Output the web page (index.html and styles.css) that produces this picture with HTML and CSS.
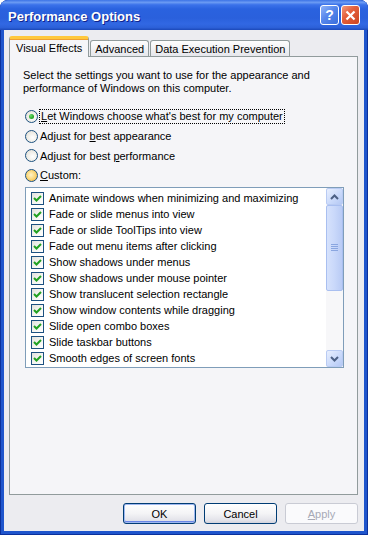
FILE: index.html
```html
<!DOCTYPE html>
<html lang="en">
<head>
    <meta charset="UTF-8">
    <meta name="viewport" content="width=device-width, initial-scale=1.0">
    <title>Performance Options</title>
    <link rel="stylesheet" href="styles.css">
</head>
<body>
    <div class="window">
        <div class="titlebar">
            <span class="title">Performance Options</span>
            <div class="caption">
                <div class="cap-btn help">?</div>
                <div class="cap-btn close">
                    <svg width="11" height="11" viewBox="0 0 11 11"><path d="M1.5 1.5 L9.5 9.5 M9.5 1.5 L1.5 9.5" stroke="#fff" stroke-width="2.2" fill="none"/></svg>
                </div>
            </div>
        </div>

        <div class="client">
            <div class="tabs">
                <div class="tab active">Visual Effects</div>
                <div class="tab">Advanced</div>
                <div class="tab">Data Execution Prevention</div>
            </div>

            <div class="panel">
                <p class="intro">Select the settings you want to use for the appearance and<br>performance of Windows on this computer.</p>

                <div class="options">
                    <div class="opt"><span class="radio checked"></span><span class="focus"><u>L</u>et Windows choose what's best for my computer</span></div>
                    <div class="opt"><span class="radio"></span><span>Adjust for <u>b</u>est appearance</span></div>
                    <div class="opt"><span class="radio"></span><span>Adjust for best <u>p</u>erformance</span></div>
                    <div class="opt"><span class="radio hot"></span><span><u>C</u>ustom:</span></div>
                </div>

                <div class="listbox">
                    <ul class="items">
                        <li><span class="check"></span>Animate windows when minimizing and maximizing</li>
                        <li><span class="check"></span>Fade or slide menus into view</li>
                        <li><span class="check"></span>Fade or slide ToolTips into view</li>
                        <li><span class="check"></span>Fade out menu items after clicking</li>
                        <li><span class="check"></span>Show shadows under menus</li>
                        <li><span class="check"></span>Show shadows under mouse pointer</li>
                        <li><span class="check"></span>Show translucent selection rectangle</li>
                        <li><span class="check"></span>Show window contents while dragging</li>
                        <li><span class="check"></span>Slide open combo boxes</li>
                        <li><span class="check"></span>Slide taskbar buttons</li>
                        <li><span class="check"></span>Smooth edges of screen fonts</li>
                    </ul>
                    <div class="scrollbar">
                        <div class="sb-btn">
                            <svg width="9" height="6" viewBox="0 0 9 6"><path d="M1 5 L4.5 1.5 L8 5" stroke="#4d6185" stroke-width="2" fill="none"/></svg>
                        </div>
                        <div class="sb-track">
                            <div class="sb-thumb">
                                <svg width="7" height="8" viewBox="0 0 7 8"><path d="M0 0.5 H7 M0 2.5 H7 M0 4.5 H7 M0 6.5 H7" stroke="#8aa6e0" stroke-width="1"/></svg>
                            </div>
                        </div>
                        <div class="sb-btn">
                            <svg width="9" height="6" viewBox="0 0 9 6"><path d="M1 1 L4.5 4.5 L8 1" stroke="#4d6185" stroke-width="2" fill="none"/></svg>
                        </div>
                    </div>
                </div>
            </div>

            <div class="buttons">
                <div class="btn default">OK</div>
                <div class="btn">Cancel</div>
                <div class="btn disabled"><u>A</u>pply</div>
            </div>
        </div>
    </div>
</body>
</html>
```

FILE: styles.css
```css
* {
    box-sizing: border-box;
}

body {
    margin: 0;
    font-family: "Liberation Sans", Arial, sans-serif;
    font-size: 11px;
    color: #000;
    background-color: #fff;
}

.window {
    width: 368px;
    height: 535px;
    display: flex;
    flex-direction: column;
    background-color: #1f55cc;
    border-radius: 8px 8px 0 0;
    box-shadow: inset 0 0 0 1px #0b309c;
    overflow: hidden;
}

/* Title bar */
.titlebar {
    height: 30px;
    flex: none;
    display: flex;
    align-items: center;
    padding: 0 8px 0 8px;
    background: linear-gradient(to bottom, #3c73e6 0%, #6a9af3 8%, #3b72ea 16%, #2a62df 30%, #2a60dc 60%, #3168e3 80%, #2c60d8 92%, #1b48b8 100%);
}

.title {
    flex: 1;
    color: #fff;
    font-weight: bold;
    font-size: 13px;
    text-shadow: 1px 1px #10238c;
    padding-top: 2px;
}

.caption {
    display: flex;
    gap: 2px;
}

.cap-btn {
    width: 19px;
    height: 20px;
    border: 1px solid #fff;
    border-radius: 3px;
    display: flex;
    align-items: center;
    justify-content: center;
}

.help {
    background: linear-gradient(135deg, #8fb3f7 0%, #5687ec 45%, #3a6ddc 100%);
    color: #fff;
    font-weight: bold;
    font-size: 14px;
}

.close {
    background: linear-gradient(135deg, #f39a7e 0%, #e4603c 40%, #cc4520 100%);
}

/* Client area */
.client {
    flex: 1;
    margin: 0 4px 4px;
    background-color: #ececf0;
    display: flex;
    flex-direction: column;
    padding: 6px 6px 7px 5px;
}

.tabs {
    height: 20px;
    display: flex;
    align-items: flex-end;
}

.tab {
    height: 16px;
    padding: 1px 4px 0;
    display: flex;
    align-items: center;
    border: 1px solid #919b9c;
    border-bottom: none;
    border-radius: 3px 3px 0 0;
    background: linear-gradient(to bottom, #fdfdfd, #e6e7ec);
    margin-left: 1px;
    white-space: nowrap;
}

.tab.active {
    height: 21px;
    margin-bottom: -1px;
    margin-left: 0;
    padding: 0 6px 1px 6px;
    background: #f5f5f8;
    border-top: 3px solid #ffc83c;
    box-shadow: inset 0 1px 0 #f0a030;
    position: relative;
    z-index: 1;
}

.panel {
    width: 349px;
    height: 439px;
    border: 1px solid #919b9c;
    background-color: #f5f5f8;
    padding: 12px 13px 0 13px;
}

.intro {
    margin: 0;
    line-height: 13px;
}

.options {
    margin-top: 12px;
}

.opt {
    height: 19.5px;
    display: flex;
    align-items: center;
    gap: 2px;
    padding-left: 2px;
}

.radio {
    width: 13px;
    height: 13px;
    border-radius: 50%;
    border: 1px solid #1c5180;
    background: radial-gradient(circle at 60% 60%, #fff 0%, #eceae3 60%, #d4d2c9 100%);
    flex: none;
    display: flex;
    align-items: center;
    justify-content: center;
}

.radio.checked::after {
    content: "";
    width: 5px;
    height: 5px;
    border-radius: 50%;
    background: radial-gradient(circle at 35% 35%, #6ddb6d 0%, #21a121 70%, #128812 100%);
}

.radio.hot {
    background: radial-gradient(circle at 45% 45%, #fff3c8 0%, #fbd87a 50%, #f1a839 100%);
}

.focus {
    outline: 1px dotted #000;
    padding: 0 1px;
    line-height: 13px;
}

/* List with checkboxes */
.listbox {
    margin: 2px 0 0 2px;
    width: 319px;
    height: 181px;
    border: 1px solid #7f9db9;
    background-color: #fff;
    display: flex;
}

.items {
    flex: 1;
    list-style: none;
    margin: 0;
    padding: 2px 0 0 5px;
    overflow: hidden;
}

.items li {
    height: 16px;
    display: flex;
    align-items: center;
    gap: 5px;
    white-space: nowrap;
}

.check {
    width: 13px;
    height: 13px;
    flex: none;
    border: 1px solid #1c5180;
    background-image: url("data:image/svg+xml,%3Csvg xmlns='http://www.w3.org/2000/svg' width='11' height='11'%3E%3Cpath d='M2 5 L4.5 7.5 L9 3' stroke='%2321a121' stroke-width='2' fill='none'/%3E%3C/svg%3E"), linear-gradient(135deg, #e2e2dc 0%, #f4f4f0 50%, #fff 100%);
}

.scrollbar {
    width: 17px;
    flex: none;
    display: flex;
    flex-direction: column;
    background-color: #f7f7f9;
}

.sb-btn {
    height: 17px;
    border: 1px solid #b9cbf3;
    border-radius: 2px;
    background: linear-gradient(135deg, #e8effe 0%, #c8d8fa 60%, #b4c8f4 100%);
    display: flex;
    align-items: center;
    justify-content: center;
}

.sb-track {
    flex: 1;
}

.sb-thumb {
    height: 86px;
    border: 1px solid #a9bff0;
    border-radius: 2px;
    background: linear-gradient(to right, #d6e2fc 0%, #c9d8fa 50%, #b9cbf5 100%);
    display: flex;
    align-items: center;
    justify-content: center;
}

/* Dialog buttons */
.buttons {
    margin-top: 8px;
    display: flex;
    justify-content: flex-end;
    gap: 8px;
}

.btn {
    width: 73px;
    height: 21px;
    border: 1px solid #003c74;
    border-radius: 3px;
    background: linear-gradient(to bottom, #ffffff 0%, #f4f4f6 50%, #e3e3ea 85%, #d2d3dc 100%);
    display: flex;
    align-items: center;
    justify-content: center;
}

.btn.default {
    box-shadow: inset 0 0 0 1px #9fb8f0, inset 0 -1px 0 1px #6a86e6;
}

.btn.disabled {
    border-color: #c9cbd4;
    background: #fafafc;
    color: #a7a9b6;
}
```
